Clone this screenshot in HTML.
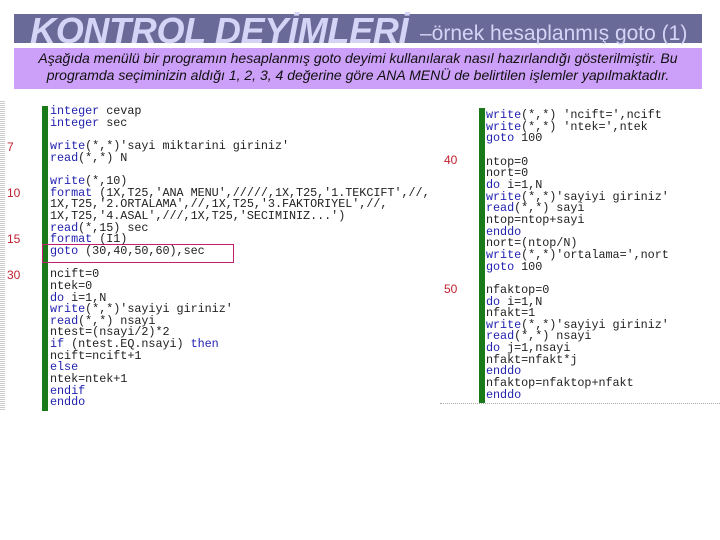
<!DOCTYPE html>
<html><head><meta charset="utf-8"><style>
body{margin:0;width:720px;height:540px;background:#fff;position:relative;overflow:hidden;font-family:"Liberation Sans",sans-serif}
.bar{position:absolute;left:14px;top:14px;width:688px;height:29px;background:#6a6a98}
.title{position:absolute;left:30px;top:13px;white-space:nowrap;color:#d4d4f6;font-style:italic;font-weight:bold;font-size:36px;line-height:36px;letter-spacing:-0.3px}
.sub{position:absolute;left:420px;top:23px;color:#d4d4f6;font-size:21px;line-height:21px;white-space:nowrap}
.purp{position:absolute;left:14px;top:48px;width:688px;height:41px;background:#cc9ff8}
.desc{position:absolute;left:14px;top:50px;width:688px;text-align:center;font-style:italic;font-size:14px;line-height:17px;color:#111;white-space:nowrap}
pre{position:absolute;margin:0;font-family:"Liberation Mono",monospace;font-size:11.8px;line-height:11.65px;color:#222;letter-spacing:-0.05px}
.k{color:#2222b0}
.gb{position:absolute;background:#1a7a1a;width:6px}
.num{position:absolute;font-family:"Liberation Sans",sans-serif;font-size:12px;color:#c02030}
.dots{position:absolute;left:0;top:100px;width:5px;height:310px;background:repeating-linear-gradient(0deg,#ccc 0 1px,#fff 1px 2px)}
</style></head><body>
<div class="bar"></div>
<div class="title">KONTROL DEYİMLERİ</div>
<div class="sub">–örnek hesaplanmış goto (1)</div>
<div class="purp"></div>
<div class="desc">Aşağıda menülü bir programın hesaplanmış goto deyimi kullanılarak nasıl hazırlandığı gösterilmiştir. Bu<br>programda seçiminizin aldığı 1, 2, 3, 4 değerine göre ANA MENÜ de belirtilen işlemler yapılmaktadır.</div>
<div class="dots"></div>
<div class="gb" style="left:42px;top:106px;height:305px"></div>
<div class="gb" style="left:479px;top:108px;height:295px"></div>
<div class="num" style="left:7px;top:140px">7</div>
<div class="num" style="left:7px;top:186px">10</div>
<div class="num" style="left:7px;top:232px">15</div>
<div class="num" style="left:7px;top:268px">30</div>
<div class="num" style="left:444px;top:153px">40</div>
<div class="num" style="left:444px;top:282px">50</div>
<div style="position:absolute;left:42px;top:244px;width:190px;height:17px;border:1.5px solid #c02070"></div>
<div style="position:absolute;left:440px;top:403px;width:280px;border-top:1px dotted #aaa"></div>
<pre style="left:50px;top:106px"><span class="k">integer</span> cevap
<span class="k">integer</span> sec

<span class="k">write</span>(*,*)'sayi miktarini giriniz'
<span class="k">read</span>(*,*) N

<span class="k">write</span>(*,10)
<span class="k">format</span> (1X,T25,'ANA MENU',/////,1X,T25,'1.TEKCIFT',//,
1X,T25,'2.ORTALAMA',//,1X,T25,'3.FAKTORIYEL',//,
1X,T25,'4.ASAL',///,1X,T25,'SECIMINIZ...')
<span class="k">read</span>(*,15) sec
<span class="k">format</span> (I1)
<span class="k">goto</span> (30,40,50,60),sec

ncift=0
ntek=0
<span class="k">do</span> i=1,N
<span class="k">write</span>(*,*)'sayiyi giriniz'
<span class="k">read</span>(*,*) nsayi
ntest=(nsayi/2)*2
<span class="k">if</span> (ntest.EQ.nsayi) <span class="k">then</span>
ncift=ncift+1
<span class="k">else</span>
ntek=ntek+1
<span class="k">endif</span>
<span class="k">enddo</span></pre>
<pre style="left:486px;top:110px"><span class="k">write</span>(*,*) 'ncift=',ncift
<span class="k">write</span>(*,*) 'ntek=',ntek
<span class="k">goto</span> 100

ntop=0
nort=0
<span class="k">do</span> i=1,N
<span class="k">write</span>(*,*)'sayiyi giriniz'
<span class="k">read</span>(*,*) sayi
ntop=ntop+sayi
<span class="k">enddo</span>
nort=(ntop/N)
<span class="k">write</span>(*,*)'ortalama=',nort
<span class="k">goto</span> 100

nfaktop=0
<span class="k">do</span> i=1,N
nfakt=1
<span class="k">write</span>(*,*)'sayiyi giriniz'
<span class="k">read</span>(*,*) nsayi
<span class="k">do</span> j=1,nsayi
nfakt=nfakt*j
<span class="k">enddo</span>
nfaktop=nfaktop+nfakt
<span class="k">enddo</span></pre>
</body></html>
